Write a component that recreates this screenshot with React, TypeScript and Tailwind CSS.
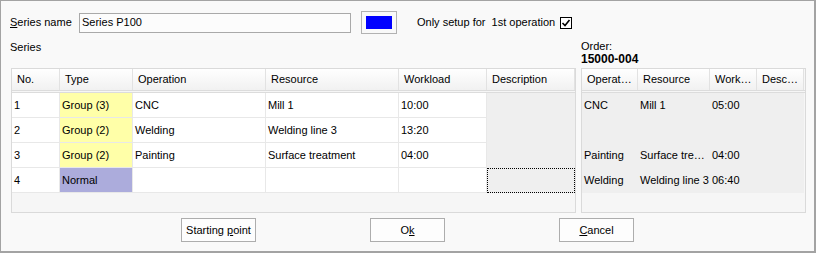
import React from 'react'

type Cell = { text?: string; bg?: string; focus?: boolean }

const leftCols = [
    { name: 'No.', w: 'w-[48px]' },
    { name: 'Type', w: 'w-[73px]' },
    { name: 'Operation', w: 'w-[133px]' },
    { name: 'Resource', w: 'w-[133px]' },
    { name: 'Workload', w: 'w-[88px]' },
    { name: 'Description', w: 'w-[88px]' },
]

const leftRows: Cell[][] = [
    [{ text: '1' }, { text: 'Group (3)', bg: 'bg-[#ffffa8]' }, { text: 'CNC' }, { text: 'Mill 1' }, { text: '10:00' }, { bg: 'bg-[#efefef]' }],
    [{ text: '2' }, { text: 'Group (2)', bg: 'bg-[#ffffa8]' }, { text: 'Welding' }, { text: 'Welding line 3' }, { text: '13:20' }, { bg: 'bg-[#efefef]' }],
    [{ text: '3' }, { text: 'Group (2)', bg: 'bg-[#ffffa8]' }, { text: 'Painting' }, { text: 'Surface treatment' }, { text: '04:00' }, { bg: 'bg-[#efefef]' }],
    [{ text: '4' }, { text: 'Normal', bg: 'bg-[#acacdc]' }, {}, {}, {}, { bg: 'bg-[#efefef]', focus: true }],
]

const rightCols = [
    { name: 'Operat…', w: 'w-[56px]' },
    { name: 'Resource', w: 'w-[72px]' },
    { name: 'Work…', w: 'w-[47px]' },
    { name: 'Desc…', w: 'w-[47px]' },
]

const rightRows = [
    ['CNC', 'Mill 1', '05:00', ''],
    ['', '', '', ''],
    ['Painting', 'Surface tre…', '04:00', ''],
    ['Welding', 'Welding line 3', '06:40', ''],
]

/* column header cell, light gradient like the WinForms grid */
function HeadCell({ name, w }: { name: string; w: string }) {
    return (
        <div className={`${w} h-full shrink-0 flex items-center pl-[5px] border-r border-[#e2e2e2] bg-gradient-to-b from-white to-[#f1f1f1] overflow-hidden whitespace-nowrap`}>
            {name}
        </div>
    )
}

function Btn({ children }: { children: React.ReactNode }) {
    return (
        <button className="w-[75px] h-[24px] border border-[#adadad] bg-[#fdfdfd] flex items-center justify-center text-black">
            <span>{children}</span>
        </button>
    )
}

export default function App() {
    return (
        <div
            className="w-[816px] h-[253px] bg-[#f9f9f9] border border-[#a3a3a3] border-r-2 border-b-2 text-[11px] text-black flex flex-col"
            style={{ fontFamily: '"Liberation Sans", Arial, sans-serif' }}
        >
            {/* top row */}
            <div className="flex items-center h-[23px] mt-[10px] pl-[9px]">
                <span className="w-[69px]"><u>S</u>eries name</span>
                <div className="w-[272px] h-[20px] border border-[#a9a9a9] bg-[#fcfcfc] flex items-center pl-[2px]">Series P100</div>
                <div className="ml-[10px] w-[36px] h-[23px] border border-[#b2b2b2] p-[4px]">
                    <div className="w-full h-full bg-[#0000ff]" />
                </div>
                <span className="ml-[20px]">Only setup for &nbsp;1st operation</span>
                <div className="ml-[5px] w-[12px] h-[12px] border border-black bg-white flex items-center justify-center">
                    <svg width="10" height="10" viewBox="0 0 10 10">
                        <path d="M1.5 5 L4 7.5 L8.5 2" stroke="black" strokeWidth="1.6" fill="none" />
                    </svg>
                </div>
            </div>

            {/* labels row */}
            <div className="flex h-[26px]">
                <div className="w-[570px] pl-[9px] pt-[5px]">Series</div>
                <div className="pl-[10px] leading-[13px] pt-[6px]">
                    <div>Order:</div>
                    <div className="font-bold text-[12px]">15000-004</div>
                </div>
            </div>

            {/* grids */}
            <div className="flex gap-[5px] pl-[10px] mt-[8px] h-[145px]">
                <div className="w-[565px] border border-[#dadada] bg-[#f6f6f6] flex flex-col">
                    <div className="flex h-[24px] border-b-[3px] border-double border-[#dcdcdc] shrink-0">
                        {leftCols.map(c => <HeadCell key={c.name} {...c} />)}
                    </div>
                    {leftRows.map((r, i) => (
                        <div key={i} className="flex h-[25px] shrink-0">
                            {r.map((c, j) => (
                                <div
                                    key={j}
                                    className={`${leftCols[j].w} shrink-0 flex items-center pl-[2px] whitespace-nowrap ${c.bg ?? 'bg-white'} ${j === 5 ? '' : 'border-r border-b border-[#e8e8e8]'} ${c.focus ? 'border border-dotted border-black' : ''}`}
                                >
                                    {c.text}
                                </div>
                            ))}
                        </div>
                    ))}
                </div>

                <div className="w-[225px] border border-[#dadada] bg-[#f6f6f6] flex flex-col">
                    <div className="flex h-[24px] border-b-[3px] border-double border-[#dcdcdc] shrink-0">
                        {rightCols.map(c => <HeadCell key={c.name} {...c} />)}
                    </div>
                    <div className="bg-[#efefef] w-[222px]">
                        {rightRows.map((r, i) => (
                            <div key={i} className="flex h-[25px]">
                                {r.map((t, j) => (
                                    <div key={j} className={`${rightCols[j].w} shrink-0 flex items-center pl-[2px] whitespace-nowrap overflow-hidden`}>
                                        {t}
                                    </div>
                                ))}
                            </div>
                        ))}
                    </div>
                </div>
            </div>

            {/* buttons */}
            <div className="flex justify-center gap-[114px] mt-[5px]">
                <Btn>Starting <u>p</u>oint</Btn>
                <Btn>O<u>k</u></Btn>
                <Btn><u>C</u>ancel</Btn>
            </div>
        </div>
    )
}
